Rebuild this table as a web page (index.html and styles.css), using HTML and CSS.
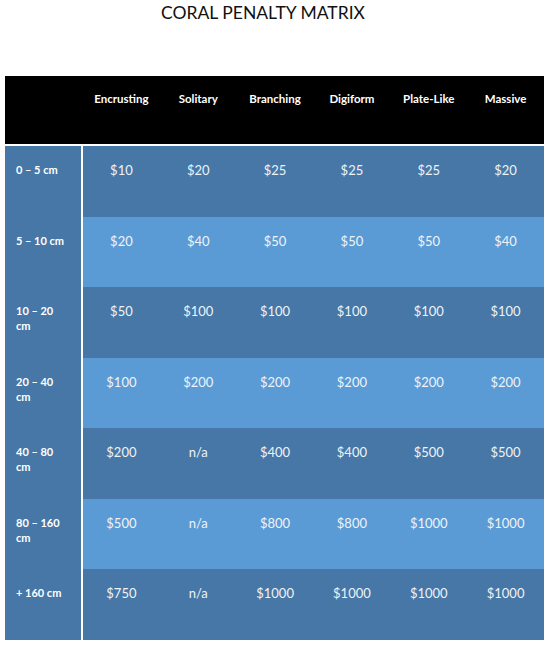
FILE: index.html
```html
<!DOCTYPE html>
<html>
<head>
<meta charset="utf-8">
<link rel="stylesheet" href="styles.css">
</head>
<body>
<h1 class="title">CORAL PENALTY MATRIX</h1>
<div class="matrix">
  <div class="head">
    <span></span>
    <span>Encrusting</span>
    <span>Solitary</span>
    <span>Branching</span>
    <span>Digiform</span>
    <span>Plate-Like</span>
    <span>Massive</span>
  </div>
  <div class="body">
    <div class="row dark"><div class="label">0 – 5 cm</div><div class="v">$10</div><div class="v">$20</div><div class="v">$25</div><div class="v">$25</div><div class="v">$25</div><div class="v">$20</div></div>
    <div class="row light"><div class="label">5 – 10 cm</div><div class="v">$20</div><div class="v">$40</div><div class="v">$50</div><div class="v">$50</div><div class="v">$50</div><div class="v">$40</div></div>
    <div class="row dark"><div class="label">10 – 20<br>cm</div><div class="v">$50</div><div class="v">$100</div><div class="v">$100</div><div class="v">$100</div><div class="v">$100</div><div class="v">$100</div></div>
    <div class="row light"><div class="label">20 – 40<br>cm</div><div class="v">$100</div><div class="v">$200</div><div class="v">$200</div><div class="v">$200</div><div class="v">$200</div><div class="v">$200</div></div>
    <div class="row dark"><div class="label">40 – 80<br>cm</div><div class="v">$200</div><div class="v">n/a</div><div class="v">$400</div><div class="v">$400</div><div class="v">$500</div><div class="v">$500</div></div>
    <div class="row light"><div class="label">80 – 160<br>cm</div><div class="v">$500</div><div class="v">n/a</div><div class="v">$800</div><div class="v">$800</div><div class="v">$1000</div><div class="v">$1000</div></div>
    <div class="row dark"><div class="label">+ 160 cm</div><div class="v">$750</div><div class="v">n/a</div><div class="v">$1000</div><div class="v">$1000</div><div class="v">$1000</div><div class="v">$1000</div></div>
  </div>
</div>
</body>
</html>
```
FILE: styles.css
```css
html, body {
  margin: 0;
  padding: 0;
  background: #fff;
}
body {
  font-family: Lato, "Liberation Sans", sans-serif;
  width: 550px;
  height: 647px;
  overflow: hidden;
}
.title {
  margin: 0;
  height: 76px;
  padding: 3px 24px 0 0;
  box-sizing: border-box;
  text-align: center;
  font-size: 17.5px;
  line-height: 20px;
  font-weight: 400;
  color: #111;
}
.matrix {
  margin-left: 5px;
  width: 539px;
}
.head {
  display: grid;
  grid-template-columns: 78px repeat(6, 1fr);
  height: 70px;
  background: #000;
  border-bottom: 2px solid #fff;
  box-sizing: border-box;
}
.head span {
  padding-top: 16px;
  text-align: center;
  color: #fff;
  font-size: 11.5px;
  line-height: 14px;
  font-weight: 700;
}
.body {
  display: grid;
  grid-template-rows: repeat(7, 1fr);
  height: 494px;
}
.row {
  display: grid;
  grid-template-columns: 78px repeat(6, 1fr);
  color: #eef3f8;
}
.row.dark { background: #4677a6; }
.row.light { background: #5b9bd5; }
.label {
  background: #4677a6;
  border-right: 2px solid #fff;
  padding: 16px 0 0 11px;
  font-size: 11px;
  line-height: 15px;
  font-weight: 700;
  color: #fff;
}
.v {
  padding-top: 16px;
  text-align: center;
  font-size: 13px;
  line-height: 16px;
}
```
